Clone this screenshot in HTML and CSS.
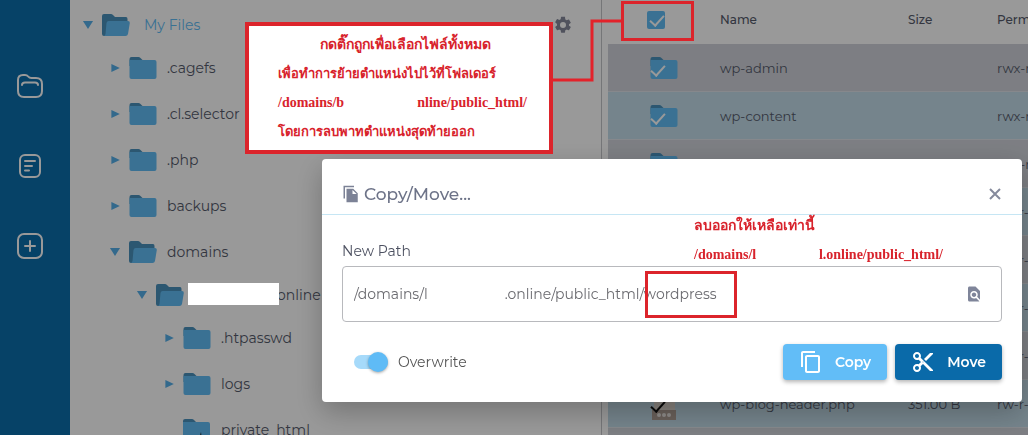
FILE: index.html
```html
<!DOCTYPE html>
<html lang="th">
<head>
<meta charset="utf-8">
<title>File Manager</title>
<link rel="stylesheet" href="styles.css">
</head>
<body>
<svg class="defs" aria-hidden="true">
  <symbol id="folder" viewBox="0 0 27 22">
    <path class="folder-back" d="M0 9V2Q0 0 2 0H9Q10 0 11 1L13 3V9Z"/>
    <path class="folder-front" d="M0 3H25Q27 3 27 5V20Q27 22 25 22H2Q0 22 0 20Z"/>
  </symbol>
  <symbol id="folder-open" viewBox="0 0 28 22">
    <path class="folder-back" d="M0 20V2Q0 0 2 0H9Q10 0 11 1L13 3H24Q25.500 3 25.500 5V12L4 22H2Q0 22 0 20Z"/>
    <path class="folder-front" d="M6.500 7H26Q28 7 27.800 9L26 20Q25.500 22 23.500 22H2Q3.200 21.500 3.500 20L4.500 9Q5 7 6.500 7Z"/>
  </symbol>
</svg>

<div class="app">
  <nav class="rail">
    <button class="rail-button" aria-label="Files">
      <svg width="28" height="28" viewBox="0 0 28 28"><path d="M2 19V8Q2 3 7 3H9Q11 3 12.200 4.500Q13.300 6 15.500 6H20Q26 6 26 12V19Q26 25 20 25H8Q2 25 2 19Z"/><path d="M6 13Q6 10.500 9 10.500H19Q22 10.500 22 13"/></svg>
    </button>
    <button class="rail-button" aria-label="Notes">
      <svg width="28" height="28" viewBox="0 0 28 28"><rect x="4" y="3" width="20" height="22" rx="5"/><path d="M9 9H19M9 14H16M9 18.500H13"/></svg>
    </button>
    <button class="rail-button" aria-label="Add">
      <svg width="28" height="28" viewBox="0 0 28 28"><rect x="2" y="2" width="24" height="24" rx="6"/><path d="M14 9V19M9 14H19"/></svg>
    </button>
  </nav>

  <section class="tree-panel">
    <ul class="tree root">
      <li>
        <div class="node top"><i class="arrow down"></i><svg class="folder-icon"><use href="#folder-open"/></svg><span>My Files</span></div>
        <ul class="tree">
          <li><div class="node"><i class="arrow"></i><svg class="folder-icon"><use href="#folder"/></svg><span>.cagefs</span></div></li>
          <li><div class="node"><i class="arrow"></i><svg class="folder-icon"><use href="#folder"/></svg><span>.cl.selector</span></div></li>
          <li><div class="node"><i class="arrow"></i><svg class="folder-icon"><use href="#folder"/></svg><span>.php</span></div></li>
          <li><div class="node"><i class="arrow"></i><svg class="folder-icon"><use href="#folder"/></svg><span>backups</span></div></li>
          <li>
            <div class="node"><i class="arrow down"></i><svg class="folder-icon"><use href="#folder-open"/></svg><span>domains</span></div>
            <ul class="tree">
              <li>
                <div class="node redacted"><i class="arrow down"></i><svg class="folder-icon"><use href="#folder-open"/></svg><span>online</span></div>
                <ul class="tree">
                  <li><div class="node"><i class="arrow"></i><svg class="folder-icon"><use href="#folder"/></svg><span>.htpasswd</span></div></li>
                  <li><div class="node"><i class="arrow"></i><svg class="folder-icon"><use href="#folder"/></svg><span>logs</span></div></li>
                  <li><div class="node"><i class="arrow none"></i><svg class="folder-icon" viewBox="0 0 28 22"><use href="#folder" width="27" height="22"/><path class="link-mark" d="M11 22L17 17L18 13L19 22Z"/></svg><span>private_html</span></div></li>
                </ul>
              </li>
            </ul>
          </li>
        </ul>
      </li>
    </ul>
    <button class="settings" aria-label="Settings">
      <svg width="20" height="20" viewBox="0 0 24 24"><path d="M19.140 12.940c.040-.3.060-.61.060-.94s-.020-.64-.070-.94l2.030-1.580a.49.49 0 0 0 .12-.61l-1.920-3.320a.49.49 0 0 0-.59-.22l-2.390.96a7 7 0 0 0-1.620-.94l-.36-2.540A.48.48 0 0 0 13.920 2h-3.840a.48.48 0 0 0-.48.410l-.36 2.540a7 7 0 0 0-1.620.94l-2.390-.96a.48.48 0 0 0-.59.220L2.720 8.470a.48.48 0 0 0 .12.610l2.030 1.580c-.050.3-.070.62-.070.940s.020.64.070.940l-2.030 1.580a.49.49 0 0 0-.12.610l1.920 3.320c.12.220.37.290.59.220l2.390-.96c.5.380 1.030.7 1.620.940l.36 2.540c.050.240.240.410.480.410h3.840c.240 0 .44-.17.470-.41l.36-2.540a7 7 0 0 0 1.620-.94l2.390.96c.22.080.47 0 .59-.22l1.920-3.320a.48.48 0 0 0-.12-.61zM12 15.600a3.600 3.600 0 1 1 0-7.200 3.600 3.600 0 0 1 0 7.200z"/></svg>
    </button>
  </section>

  <section class="files">
    <table>
      <colgroup><col class="c-icon"><col class="c-name"><col class="c-size"><col class="c-perm"></colgroup>
      <thead>
        <tr><th class="all"><input class="box" type="checkbox" checked aria-label="Select all"></th><th>Name</th><th>Size</th><th>Permission</th></tr>
      </thead>
      <tbody>
        <tr><td><label class="pick"><svg class="folder-icon"><use href="#folder"/></svg><input class="tick" type="checkbox" checked aria-label="wp-admin"></label></td><td>wp-admin</td><td></td><td>rwx-r-xr-x</td></tr>
        <tr><td><label class="pick"><svg class="folder-icon"><use href="#folder"/></svg><input class="tick" type="checkbox" checked aria-label="wp-content"></label></td><td>wp-content</td><td></td><td>rwx-r-xr-x</td></tr>
        <tr><td><label class="pick"><svg class="folder-icon"><use href="#folder"/></svg></label></td><td></td><td></td><td>rwx-r-xr-x</td></tr>
        <tr><td></td><td></td><td></td><td>rw-r--r--</td></tr>
        <tr><td></td><td></td><td></td><td>rw-r--r--</td></tr>
        <tr><td></td><td></td><td></td><td>rw-r--r--</td></tr>
        <tr><td></td><td></td><td></td><td>rw-r--r--</td></tr>
        <tr><td><label class="pick"><svg width="27" height="32" viewBox="0 0 27 32"><path fill="#e0d8d0" d="M4 0H25V22H4Z"/><path fill="#b0a096" d="M2 22H26V32H2Z"/><g fill="#ede8e4"><circle cx="9" cy="27" r="2"/><circle cx="14" cy="27" r="2"/><circle cx="19" cy="27" r="2"/></g></svg><input class="tick dark" type="checkbox" checked aria-label="wp-blog-header.php"></label></td><td>wp-blog-header.php</td><td>351.00 B</td><td>rw-r--r--</td></tr>
        <tr><td></td><td></td><td></td><td></td></tr>
      </tbody>
    </table>
  </section>
</div>

<div class="backdrop">
  <div class="dialog" role="dialog" aria-labelledby="dialog-title">
    <header class="dialog-head">
      <svg width="18" height="18" viewBox="0 0 24 24"><path d="M16 1H2v17h2V3h12V1zm-1 4l6 6v12H6V5h9zm-1 7h5.500L14 6.500V12z"/></svg>
      <h2 id="dialog-title">Copy/Move...</h2>
      <button class="close" aria-label="Close"><svg width="12" height="12" viewBox="0 0 12 12"><path d="M1 1L11 11M11 1L1 11"/></svg></button>
    </header>
    <form class="dialog-body">
      <label class="field-label" for="path">New Path</label>
      <div class="field">
        <input id="path" type="text" value="/domains/l                     .online/public_html/wordpress">
        <button type="button" class="browse" aria-label="Browse"><svg width="18" height="18" viewBox="0 0 24 24"><path d="M20 19.590V8l-6-6H6c-1.100 0-1.990.9-1.990 2L4 20c0 1.100.89 2 1.990 2H18c.45 0 .85-.15 1.190-.4l-4.430-4.430c-.8.520-1.740.830-2.760.830-2.760 0-5-2.240-5-5s2.240-5 5-5 5 2.240 5 5c0 1.020-.31 1.960-.83 2.750L20 19.590zM9 13c0 1.660 1.340 3 3 3s3-1.340 3-3-1.340-3-3-3-3 1.340-3 3z"/></svg></button>
      </div>
      <div class="dialog-foot">
        <label class="switch"><input type="checkbox" checked><span>Overwrite</span></label>
        <div class="actions">
          <button type="button" class="action copy"><svg width="24" height="24" viewBox="0 0 24 24"><path d="M16 1H4c-1.100 0-2 .9-2 2v14h2V3h12V1zm3 4H8c-1.100 0-2 .9-2 2v14c0 1.100.9 2 2 2h11c1.100 0 2-.9 2-2V7c0-1.100-.9-2-2-2zm0 16H8V7h11v14z"/></svg>Copy</button>
          <button type="button" class="action move"><svg width="24" height="24" viewBox="0 0 24 24"><path d="M9.640 7.640c.23-.5.36-1.050.36-1.640 0-2.210-1.790-4-4-4S2 3.790 2 6s1.790 4 4 4c.59 0 1.140-.13 1.640-.36L10 12l-2.360 2.360C7.140 14.130 6.590 14 6 14c-2.210 0-4 1.790-4 4s1.790 4 4 4 4-1.790 4-4c0-.59-.13-1.140-.36-1.640L12 14l7 7h3v-1L9.640 7.640zM6 8c-1.100 0-2-.89-2-2s.9-2 2-2 2 .89 2 2-.9 2-2 2zm0 12c-1.100 0-2-.89-2-2s.9-2 2-2 2 .89 2 2-.9 2-2 2zm6-7.500c-.28 0-.5-.22-.5-.5s.22-.5.5-.5.5.22.5.5-.22.5-.5.5zM19 3l-6 6 2 2 7-7V3z"/></svg>Move</button>
        </div>
      </div>
    </form>
  </div>
</div>

<div class="patch"></div>
<div class="note boxed">
  <p class="first">กดติ๊กถูกเพื่อเลือกไฟล์ทั้งหมด</p>
  <p>เพื่อทำการย้ายตำแหน่งไปไว้ที่โฟลเดอร์</p>
  <p class="path"><span>/domains/b</span><span>nline/public_html/</span></p>
  <p>โดยการลบพาทตำแหน่งสุดท้ายออก</p>
</div>
<div class="note result">
  <p>ลบออกให้เหลือเท่านี้</p>
  <p class="path"><span>/domains/l</span><span>l.online/public_html/</span></p>
</div>
<svg class="connector" width="76" height="64" viewBox="0 0 76 64"><path d="M2 61H44V2H74"/></svg>
<div class="mark mark-all"></div>
<div class="mark mark-word"></div>
</body>
</html>
```

FILE: styles.css
```css
* { box-sizing: border-box; }
html, body { height: 100%; }
body {
  margin: 0;
  overflow: hidden;
  background: #fff;
  color: #555a6b;
  font: 14px/20px Montserrat, Inter, "Noto Sans", sans-serif;
}
button { padding: 0; border: 0; background: none; font: inherit; cursor: pointer; }
svg { display: block; flex: none; }
h2, p, ul { margin: 0; padding: 0; }
.defs { position: absolute; width: 0; height: 0; }
.folder-front { fill: #62bdf5; }
.folder-back { fill: #4a91bd; }
.link-mark { fill: #111; }

.app { display: flex; height: 100vh; overflow: hidden; }

.rail {
  flex: none;
  width: 70px;
  padding: 72px 0 0 16px;
  display: flex;
  flex-direction: column;
  align-items: flex-start;
  gap: 52px;
  background: #0a6eac;
}
.rail-button svg { fill: none; stroke: #fff; stroke-width: 2; stroke-linecap: round; }

.tree-panel {
  flex: none;
  width: 532px;
  padding: 2px 28px 0 12px;
  display: flex;
  justify-content: space-between;
  align-items: flex-start;
  border-right: 1px solid #c4c5c9;
}
.tree { list-style: none; margin-top: -3px; padding-left: 27px; }
.tree.root { margin: 0; padding: 0; }
.node { display: flex; align-items: center; gap: 10px; height: 46px; white-space: nowrap; }
.node.top { gap: 14px; color: #5fbcf5; }
.node.top .folder-icon { margin-left: -4px; }
.folder-icon { width: 28px; height: 22px; }
.arrow {
  width: 12px;
  height: 8px;
  margin-right: -2px;
  background: #56b0ea;
  clip-path: polygon(20% 0, 90% 50%, 20% 100%);
}
.arrow.down { clip-path: polygon(8% 0, 92% 0, 50% 100%); }
.arrow.none { visibility: hidden; }
.redacted span { padding-left: 83px; }
.settings { margin-top: 13px; }
.settings svg { fill: #85899c; }

.files { flex: 1; min-width: 0; padding-left: 6px; overflow: hidden; }
table { width: 100%; min-width: 500px; table-layout: fixed; border-collapse: separate; border-spacing: 0; }
.c-icon { width: 112px; }
.c-name { width: 188px; }
.c-size { width: 89px; }
th, td { height: 48px; padding: 0; text-align: left; white-space: nowrap; font-size: 13px; font-weight: 400; }
th { height: 44px; padding-bottom: 4px; font-size: 12px; font-weight: 500; }
td { border-bottom: 1px solid #dfe3e9; }
tbody tr { background: #d0d3da; }
tbody tr:nth-child(even) { background: #c3dce9; }
th.all { padding-left: 39px; }
.box { appearance: none; display: block; position: relative; width: 18px; height: 18px; margin: 0; border-radius: 2px; background: #62bdf5; }
.box::before, .tick::before {
  content: "";
  position: absolute;
  left: 6px;
  top: 1px;
  width: 6px;
  height: 12px;
  border: solid #fff;
  border-width: 0 2px 2px 0;
  transform: rotate(42deg);
}
.pick { position: relative; display: block; width: 28px; margin-left: 42px; }
.tick { appearance: none; position: absolute; left: -2px; top: 4px; width: 16px; height: 16px; margin: 0; }
.tick.dark { top: 9px; }
.tick.dark::before { border-color: #111; }

.backdrop {
  position: fixed;
  inset: 0;
  padding: 159px 6px 0 322px;
  background: rgba(0, 0, 0, .4);
}
.dialog {
  border-radius: 4px;
  background: #fff;
  box-shadow: 0 10px 28px rgba(0, 0, 0, .25);
}
.dialog-head {
  display: flex;
  align-items: center;
  gap: 4px;
  height: 56px;
  padding: 14px 20px 0;
  border-bottom: 1px solid #c6e6f4;
  color: #6d7388;
}
.dialog-head svg { fill: #7c8296; }
.dialog-head h2 { flex: 1; font-size: 17px; font-weight: 500; }
.close { padding: 1px; }
.close svg { stroke: #858a9c; stroke-width: 2; }
.dialog-body { padding: 26px 20px 22px; }
.field-label { display: block; margin-bottom: 5px; color: #4c5060; }
.field {
  display: flex;
  align-items: center;
  height: 56px;
  padding: 0 18px 0 11px;
  border: 1px solid #b8b9bd;
  border-radius: 4px;
}
.field input { flex: 1; min-width: 0; padding: 0; border: 0; outline: 0; background: none; color: #6b6b70; font: inherit; }
.browse svg { fill: #7f859a; }
.dialog-foot { display: flex; align-items: center; justify-content: space-between; margin-top: 22px; padding-left: 12px; }
.switch { display: flex; align-items: center; gap: 10px; color: #555; }
.switch input { appearance: none; position: relative; width: 34px; height: 14px; margin: 0; border-radius: 7px; background: #a6dafa; }
.switch input::before {
  content: "";
  position: absolute;
  right: 0;
  top: -3px;
  width: 20px;
  height: 20px;
  border-radius: 50%;
  background: #5fbbf6;
  box-shadow: 0 1px 3px rgba(0, 0, 0, .35);
}
.actions { display: flex; gap: 8px; }
.action {
  display: flex;
  align-items: center;
  gap: 12px;
  height: 36px;
  padding: 0 16px;
  border-radius: 4px;
  color: #fff;
  font-size: 14px;
  font-weight: 600;
  box-shadow: 0 2px 4px rgba(0, 0, 0, .3);
}
.action svg { fill: #fff; }
.copy { background: #62bdf7; }
.move { background: #0a6aa9; }

/* Annotations lying over the interface */
.patch { position: absolute; left: 188px; top: 283px; width: 91px; height: 22px; background: #fff; }
.note { position: absolute; color: #d8232c; font: bold 14px/29px "Liberation Serif", serif; white-space: nowrap; }
.note .path { display: flex; justify-content: space-between; }
.boxed { left: 245px; top: 22px; width: 308px; padding: 4px 22px 4px 29px; border: 4px solid #dc242b; background: #fff; font-size: 13px; }
.boxed .first { padding-left: 42px; font-size: 14px; }
.boxed .path { font-size: 14px; }
.result { left: 694px; top: 211px; width: 249px; }
.connector { position: absolute; left: 548px; top: 19px; fill: none; stroke: #e3222a; stroke-width: 3; }
.mark { position: absolute; border: 3px solid #dc242b; }
.mark-all { left: 621px; top: 1px; width: 73px; height: 40px; }
.mark-word { left: 645px; top: 271px; width: 92px; height: 47px; }
```
